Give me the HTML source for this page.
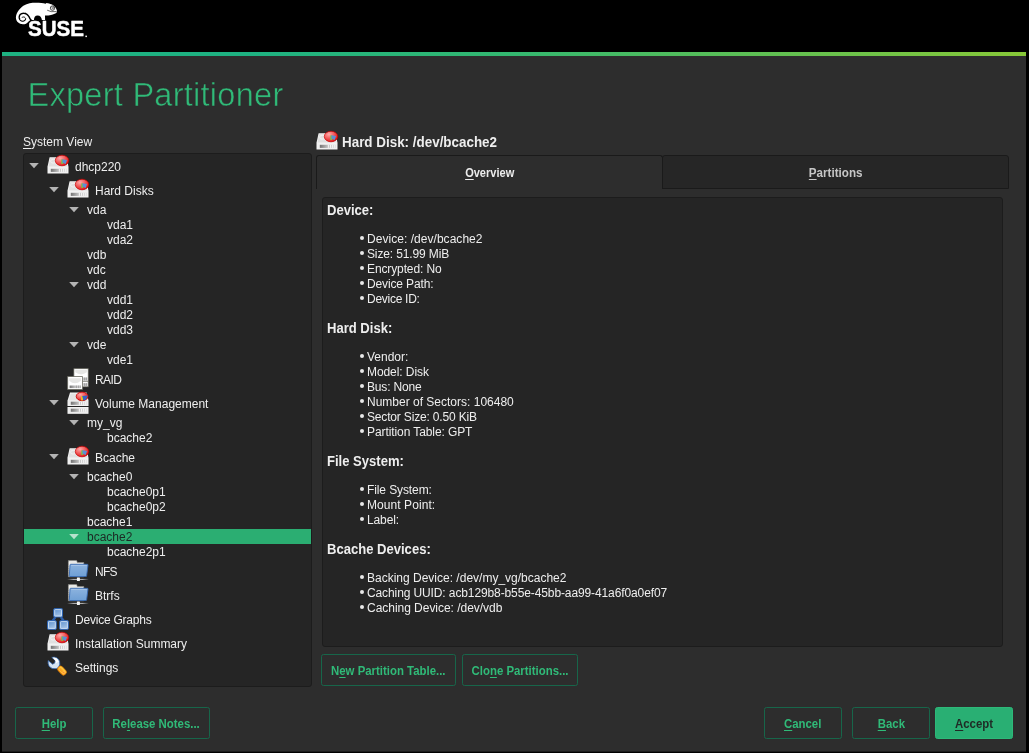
<!DOCTYPE html>
<html><head><meta charset="utf-8"><title>Expert Partitioner</title>
<style>
*{box-sizing:border-box;margin:0;padding:0}
html,body{width:1029px;height:753px;overflow:hidden;background:#000}
body{font-family:"Liberation Sans",sans-serif;font-size:12px;color:#eeeeee;position:relative}
u{text-decoration:underline;text-underline-offset:2px}
#wrap{position:absolute;left:0;top:0;width:1029px;height:753px;will-change:transform}
#main{position:absolute;left:2px;top:56px;width:1024px;height:695px;background:#2d2d2d}
#bar{position:absolute;left:2px;top:52px;width:1024px;height:4px;background:linear-gradient(to right,#1eb282 0%,#1eb282 24%,#34b870 50%,#60c052 75%,#88c838 100%)}
#title{position:absolute;left:27.5px;top:73px;letter-spacing:0.24px;font-size:32.6px;color:#30ba78;line-height:44px;white-space:nowrap;-webkit-text-stroke:0.55px #2d2d2d}
.lbl{position:absolute;white-space:nowrap}
#tree{position:absolute;left:23px;top:153px;width:289px;height:534px;background:#252525;border:1px solid #1c1c1c;border-radius:3px}
.row{position:absolute;left:0;width:287px;white-space:nowrap}
.row.sel{background:#2bae72;color:#1c2a24}
.tx{position:absolute;top:0;transform:translateY(0.5px)}
.icw{position:absolute;top:0;width:24px;height:24px}
.ic{display:block}
.ar{position:absolute;width:10px;height:6px;background:#b4b4b4;clip-path:polygon(0.2px 0,9.8px 0,5px 5.3px)}
.sel .ar{background:#b6e2cc}
#hdr{position:absolute;left:342px;top:133px;font-weight:bold;font-size:14.7px;line-height:18px;white-space:nowrap;transform:scaleX(.913);transform-origin:0 50%}
.tab{position:absolute;text-align:center;font-weight:bold;color:#ececec}
#tab1{left:316px;top:155px;width:347px;height:34px;border:1px solid #1a1a1a;border-bottom:none;border-radius:3px 3px 0 0;line-height:34px;background:#2d2d2d}
#tab2{left:662px;top:155px;width:347px;height:34px;border:1px solid #1a1a1a;border-radius:3px 3px 0 0;line-height:35px;background:#262626;color:#c6c6c6}
#pane{position:absolute;left:322px;top:197px;width:681px;height:450px;background:#252525;border:1px solid #1c1c1c;border-radius:3px}
#pane h3{position:absolute;left:4px;font-size:14.5px;line-height:18px;font-weight:bold;white-space:nowrap;transform:scaleX(0.9);transform-origin:0 50%}
#pane ul{position:absolute;left:37px;list-style:none}
#pane li{height:15px;line-height:15px;white-space:nowrap;position:relative;padding-left:7px}
#pane li:before{content:"";position:absolute;left:0;top:3.5px;width:4px;height:4px;border-radius:50%;background:#e8e8e8}
.btn{position:absolute;height:32px;border:1px solid #17664a;border-radius:2.5px;color:#30ba78;font-weight:bold;text-align:center;line-height:33px;white-space:nowrap}
.btn span,.tab span{display:inline-block;transform:scaleX(.95)}
.btn.def{background:#29af73;border-color:#2db979;color:#1f2a25}
</style></head><body>
<svg width="0" height="0" style="position:absolute">
<defs>
<linearGradient id="g-vent" x1="0" y1="0" x2="1" y2="0"><stop offset="0" stop-color="#747474"/><stop offset="0.5" stop-color="#c4c4c4"/><stop offset="1" stop-color="#e2e2e2"/></linearGradient>
<radialGradient id="g-red" cx="0.35" cy="0.3" r="0.75"><stop offset="0" stop-color="#ffaaaa"/><stop offset="0.5" stop-color="#f25c5c"/><stop offset="0.85" stop-color="#e62a2a"/><stop offset="1" stop-color="#cc0000"/></radialGradient>
<linearGradient id="g-net" gradientUnits="userSpaceOnUse" x1="1" y1="0" x2="23" y2="0"><stop offset="0" stop-color="#d8d8d8" stop-opacity="0"/><stop offset="0.3" stop-color="#e0e0e0" stop-opacity="0.9"/><stop offset="0.7" stop-color="#e0e0e0" stop-opacity="0.9"/><stop offset="1" stop-color="#d8d8d8" stop-opacity="0"/></linearGradient>
<linearGradient id="g-blue" x1="0" y1="0" x2="0" y2="1"><stop offset="0" stop-color="#8db3de"/><stop offset="1" stop-color="#6f9fd4"/></linearGradient>
<linearGradient id="g-sq" x1="0" y1="0" x2="0.4" y2="1"><stop offset="0" stop-color="#5a8fce"/><stop offset="1" stop-color="#a4c3e6"/></linearGradient>
<linearGradient id="g-or" x1="0" y1="0" x2="0" y2="1"><stop offset="0" stop-color="#ffc83a"/><stop offset="1" stop-color="#f58a10"/></linearGradient>
<g id="vent"><rect x="0" y="0" width="16.2" height="3.1" fill="url(#g-vent)"/><path d="M8.6 0v3.1M10.7 0v3.1M12.8 0v3.1M14.9 0v3.1" stroke="#f4f4f4" stroke-width="1"/></g>
<g id="pie"><rect x="-0.9" y="-1.2" width="1.9" height="4.6" fill="#7fc241"/><path d="M0.2 -1.4L4.8 -0.6L3.2 3.9L1.6 2.2L0.4 2.6Z" fill="#5b8fd6"/></g>
<g id="i-hd">
<path d="M3.6 3.3h17l1.9 9.5v6.8h-21v-6.8z" fill="#f4f4f4"/>
<path d="M4.3 4.2h15.6l1.6 8.2h-19z" fill="#e0e0e0"/>
<ellipse cx="7.2" cy="7.2" rx="2.6" ry="1.9" fill="none" stroke="#f4f4f4" stroke-width="0.8"/>
<rect x="2.2" y="13.4" width="19.6" height="5.6" fill="#f0f0f0"/>
<use href="#vent" x="4.8" y="14.8"/>
<ellipse cx="16" cy="6.5" rx="6.7" ry="5.3" fill="url(#g-red)" stroke="#c80000" stroke-width="0.7"/>
<use href="#pie" x="16.2" y="6.6"/>
</g>
<g id="i-lvm">
<path d="M4 1.6h16.6l1.9 8v5.4h-21v-5.4z" fill="#f4f4f4"/>
<path d="M4.7 2.4h15.2l1.6 7h-19z" fill="#e3e3e3"/>
<rect x="2.2" y="10" width="19.6" height="4.4" fill="#ececec"/>
<use href="#vent" x="4.8" y="10.7"/>
<rect x="1.5" y="16" width="21" height="6.8" fill="#f4f4f4"/>
<rect x="2.2" y="16.7" width="19.6" height="5.4" fill="#ececec"/>
<use href="#vent" x="4.8" y="17.7"/>
<ellipse cx="16.1" cy="5.4" rx="5.9" ry="4.3" fill="url(#g-red)" stroke="#c00000" stroke-width="0.8"/>
<rect x="15" y="5" width="2" height="4.4" fill="#e8c020"/><path d="M16.2 5L22 4.6L20 8.6L17.4 9.4Z" fill="#3465c4"/>
</g>
<g id="i-raid">
<rect x="7.9" y="1.7" width="14.3" height="18.1" fill="#fff" stroke="#6c6c62" stroke-width="0.7"/>
<path d="M9.2 3.1h11.7v2.2q-5.8 4.2-11.7 0z" fill="#e6e6e4"/>
<rect x="17" y="10.5" width="4.6" height="2.9" fill="#c8c8c8"/><path d="M18.6 10.5v2.9M20.4 10.5v2.9" stroke="#8c8c8c" stroke-width="0.7"/>
<path d="M16.6 14.3h5.6" stroke="#6c6c62" stroke-width="0.8"/>
<rect x="17" y="16.2" width="4.6" height="2.7" fill="#c8c8c8"/><path d="M18.6 16.2v2.7M20.4 16.2v2.7" stroke="#8c8c8c" stroke-width="0.7"/>
<rect x="1.7" y="9.6" width="14.7" height="12.8" fill="#fff" stroke="#6c6c62" stroke-width="0.8"/>
<path d="M3.2 11.2h11.6v2.6q-5.8 5-11.6 0z" fill="#e6e6e4"/>
<rect x="3.6" y="18.5" width="11.4" height="2.6" fill="url(#g-vent)"/><path d="M10.4 18.5v2.6M12.4 18.5v2.6M14.2 18.5v2.6" stroke="#8c8c8c" stroke-width="0.7"/>
</g>
<g id="i-nfs">
<path d="M2.4 1.5h8.2l0.8 2h6.4v14.3h-15.4z" fill="#e9e9e6" stroke="#8a8a84" stroke-width="0.6"/>
<path d="M3.3 3.4v13" stroke="#fff" stroke-width="0.9" stroke-dasharray="1.2 1"/>
<path d="M4.7 5.3h16.6q0.8 0 0.7 0.8l-1.4 10.8q-0.1 0.6-0.8 0.6h-15.9q-0.7 0-0.6-0.7l0.7-10.8q0.1-0.7 0.7-0.7z" fill="url(#g-blue)" stroke="#3568b0" stroke-width="0.9"/>
<path d="M5.2 6.4h15.6" stroke="#b4cfee" stroke-width="0.7"/>
<path d="M1.2 20.4h21.4" stroke="url(#g-net)" stroke-width="0.9"/>
<rect x="10.9" y="18.6" width="3" height="3.4" rx="0.5" fill="#f4f4f4"/>
</g>
<g id="i-graph">
<path d="M9.5 10l-3 4M14.8 10l3 4" stroke="#2c5ea8" stroke-width="2.4"/>
<rect x="7.7" y="1.6" width="8.8" height="8.4" rx="1" fill="url(#g-sq)" stroke="#2c62b0" stroke-width="1"/>
<rect x="8.7" y="2.6" width="6.8" height="6.4" rx="0.6" fill="none" stroke="#d4e3f5" stroke-width="0.8"/>
<rect x="1.5" y="13.6" width="8.8" height="8.8" rx="1" fill="url(#g-sq)" stroke="#2c62b0" stroke-width="1"/>
<rect x="2.5" y="14.6" width="6.8" height="6.8" rx="0.6" fill="none" stroke="#d4e3f5" stroke-width="0.8"/>
<rect x="13.6" y="13.6" width="8.8" height="8.8" rx="1" fill="url(#g-sq)" stroke="#2c62b0" stroke-width="1"/>
<rect x="14.6" y="14.6" width="6.8" height="6.8" rx="0.6" fill="none" stroke="#d4e3f5" stroke-width="0.8"/>
</g>
<g id="i-set">
<path d="M5.8 2.4Q11.6 1.2 13.5 6.2Q14.6 9.6 12.6 12.2L10.6 13.6Q6 14.6 3.2 11.4Q1.6 8.6 2.2 5.6L6.6 9.2Q9.4 8.6 9.4 5.6Z" fill="#d6e4f2" stroke="#3a6cb4" stroke-width="0.8" stroke-linejoin="round"/>
<path d="M6.6 2.6Q11 2.2 12.6 6.4L9.8 8.6Q10 5.6 6.6 2.6z" fill="#fff"/>
<rect x="-4.9" y="-2.8" width="9.8" height="5.6" rx="2.4" transform="translate(16 15.6) rotate(47)" fill="url(#g-or)" stroke="#f08a08" stroke-width="0.7"/>
<rect x="-3.6" y="-1.6" width="7.2" height="3.2" rx="1.4" transform="translate(16 15.6) rotate(47)" fill="none" stroke="#ffd858" stroke-width="0.6"/><circle cx="17.7" cy="17.5" r="1.1" fill="#ff8c28" stroke="#ffd070" stroke-width="0.4"/>
</g>
</defs></svg>
<div id="wrap">
<svg id="logo" width="100" height="52" viewBox="0 0 100 52" style="position:absolute;left:0;top:0">
<path d="M15.9 17.8C16 13.5 18.2 9.6 23.3 5.7C28 3.2 32 2.7 36 2.75C40 2.8 43 2.9 45.6 3.7L46.5 3C48.5 3.2 50 3.8 51.4 4.3C53.5 5.3 55.2 6.8 56.1 8.4C56.8 9.6 57 10.8 56.9 11.8C56.6 12.8 56 13.3 55.3 13.6C53.5 14.4 52 14.7 51 14.9C49.5 15.2 47.5 15.4 45 15.6L45.1 19.9L41.9 19.9C41.6 17.5 40.2 15.5 37.6 15.5C35 15.5 34 17.6 34 19.9L30.4 19.9L28.6 21.4C27 23.6 25 24.3 22.9 24.25C19 24.2 16 21.5 15.9 17.8Z" fill="#fff"/>
<path d="M22.20 17.35 L22.26 17.33 L22.33 17.30 L22.42 17.27 L22.51 17.24 L22.61 17.20 L22.73 17.16 L22.84 17.12 L22.96 17.08 L23.07 17.05 L23.19 17.02 L23.30 17.01 L23.40 17.00 L23.50 17.00 L23.60 17.00 L23.70 17.01 L23.81 17.01 L23.91 17.03 L24.01 17.05 L24.11 17.07 L24.21 17.10 L24.31 17.14 L24.41 17.18 L24.51 17.24 L24.60 17.30 L24.70 17.37 L24.80 17.45 L24.91 17.54 L25.02 17.64 L25.13 17.75 L25.23 17.86 L25.33 17.97 L25.41 18.09 L25.49 18.22 L25.55 18.34 L25.58 18.47 L25.60 18.60 L25.60 18.74 L25.58 18.88 L25.54 19.04" fill="none" stroke="#000" stroke-width="1.0" stroke-linecap="round" stroke-linejoin="round"/><path d="M25.54 19.04 L25.49 19.20 L25.43 19.37 L25.35 19.53 L25.26 19.70 L25.17 19.86 L25.06 20.01 L24.95 20.15 L24.83 20.28 L24.70 20.40 L24.56 20.51 L24.41 20.61 L24.24 20.71 L24.07 20.81 L23.88 20.90 L23.69 20.98 L23.49 21.05 L23.29 21.11 L23.09 21.16 L22.89 21.19 L22.69 21.20 L22.50 21.20 L22.31 21.18 L22.11 21.15 L21.90 21.10 L21.69 21.03 L21.48 20.96 L21.27 20.87 L21.07 20.77 L20.87 20.66 L20.68 20.53 L20.51 20.40 L20.34 20.25 L20.20 20.10 L20.07 19.93 L19.94 19.74 L19.83 19.54 L19.72 19.32 L19.62 19.09 L19.53 18.85" fill="none" stroke="#000" stroke-width="1.1" stroke-linecap="round" stroke-linejoin="round"/><path d="M19.53 18.85 L19.45 18.61 L19.38 18.36 L19.33 18.11 L19.29 17.87 L19.26 17.63 L19.25 17.40 L19.25 17.17 L19.27 16.93 L19.29 16.69 L19.33 16.45 L19.38 16.20 L19.45 15.96 L19.52 15.73 L19.61 15.50 L19.72 15.28 L19.83 15.07 L19.96 14.88 L20.10 14.70 L20.26 14.54 L20.44 14.38 L20.63 14.24 L20.84 14.10 L21.07 13.97 L21.30 13.86 L21.55 13.75 L21.79 13.66 L22.05 13.57 L22.30 13.50 L22.55 13.44 L22.80 13.40 L23.05 13.37 L23.31 13.35 L23.58 13.34 L23.85 13.34 L24.13 13.35 L24.41 13.38 L24.68 13.41 L24.96 13.46 L25.23 13.53" fill="none" stroke="#000" stroke-width="1.45" stroke-linecap="round" stroke-linejoin="round"/><path d="M25.23 13.53 L25.50 13.60 L25.75 13.69 L26.00 13.80 L26.24 13.92 L26.48 14.07 L26.72 14.23 L26.95 14.40 L27.18 14.59 L27.40 14.79 L27.62 15.00 L27.83 15.22 L28.03 15.44 L28.23 15.66 L28.42 15.88 L28.60 16.10 L28.77 16.33 L28.93 16.57 L29.08 16.82 L29.22 17.08 L29.36 17.35 L29.49 17.61 L29.61 17.87 L29.73 18.13 L29.85 18.37 L29.97 18.60 L30.08 18.81 L30.20 19.00 L30.32 19.17 L30.44 19.32 L30.56 19.47 L30.67 19.60 L30.79 19.72 L30.90 19.83 L31.01 19.93 L31.10 20.02 L31.19 20.10 L31.27 20.18 L31.34 20.24 L31.40 20.30" fill="none" stroke="#000" stroke-width="1.45" stroke-linecap="round" stroke-linejoin="round"/>
<circle cx="52.5" cy="8.1" r="2.2" fill="none" stroke="#000" stroke-width="0.7"/>
<circle cx="52.7" cy="7.9" r="0.9" fill="none" stroke="#000" stroke-width="0.5"/>
<path d="M47.2 10.2Q50.5 12.4 56.6 11.6" fill="none" stroke="#000" stroke-width="0.6"/>
<text x="28" y="36.3" font-family="'Liberation Sans',sans-serif" font-weight="bold" font-size="21.6" fill="#fff" stroke="#fff" stroke-width="0.5" stroke-linejoin="round" textLength="56" lengthAdjust="spacingAndGlyphs">SUSE</text>
<rect x="85.4" y="35.6" width="1.5" height="1.5" fill="#fff"/>
</svg>
<div id="bar"></div>
<div id="main"></div><div style="position:absolute;left:2px;top:751px;width:1024px;height:1px;background:#1c1c1c"></div>
<div id="title">Expert Partitioner</div>
<div class="lbl" style="left:23px;top:134px;line-height:16px"><u>S</u>ystem View</div>
<div id="tree">
<div class="row" style="top:0px;height:24px;line-height:24px"><i class="ar" style="left:5px;top:9px"></i><span class="icw" style="left:22px"><svg class="ic" width="24" height="24" viewBox="0 0 24 24"><use href="#i-hd"/></svg></span><span class="tx" style="left:51px">dhcp220</span></div>
<div class="row" style="top:24px;height:24px;line-height:24px"><i class="ar" style="left:25px;top:9px"></i><span class="icw" style="left:42px"><svg class="ic" width="24" height="24" viewBox="0 0 24 24"><use href="#i-hd"/></svg></span><span class="tx" style="left:71px">Hard Disks</span></div>
<div class="row" style="top:48px;height:15px;line-height:15px"><i class="ar" style="left:45px;top:5px"></i><span class="tx" style="left:63px">vda</span></div>
<div class="row" style="top:63px;height:15px;line-height:15px"><span class="tx" style="left:83px">vda1</span></div>
<div class="row" style="top:78px;height:15px;line-height:15px"><span class="tx" style="left:83px">vda2</span></div>
<div class="row" style="top:93px;height:15px;line-height:15px"><span class="tx" style="left:63px">vdb</span></div>
<div class="row" style="top:108px;height:15px;line-height:15px"><span class="tx" style="left:63px">vdc</span></div>
<div class="row" style="top:123px;height:15px;line-height:15px"><i class="ar" style="left:45px;top:5px"></i><span class="tx" style="left:63px">vdd</span></div>
<div class="row" style="top:138px;height:15px;line-height:15px"><span class="tx" style="left:83px">vdd1</span></div>
<div class="row" style="top:153px;height:15px;line-height:15px"><span class="tx" style="left:83px">vdd2</span></div>
<div class="row" style="top:168px;height:15px;line-height:15px"><span class="tx" style="left:83px">vdd3</span></div>
<div class="row" style="top:183px;height:15px;line-height:15px"><i class="ar" style="left:45px;top:5px"></i><span class="tx" style="left:63px">vde</span></div>
<div class="row" style="top:198px;height:15px;line-height:15px"><span class="tx" style="left:83px">vde1</span></div>
<div class="row" style="top:213px;height:24px;line-height:24px"><span class="icw" style="left:42px"><svg class="ic" width="24" height="24" viewBox="0 0 24 24"><use href="#i-raid"/></svg></span><span class="tx" style="left:71px;letter-spacing:-0.6px">RAID</span></div>
<div class="row" style="top:237px;height:24px;line-height:24px"><i class="ar" style="left:25px;top:9px"></i><span class="icw" style="left:42px"><svg class="ic" width="24" height="24" viewBox="0 0 24 24"><use href="#i-lvm"/></svg></span><span class="tx" style="left:71px">Volume Management</span></div>
<div class="row" style="top:261px;height:15px;line-height:15px"><i class="ar" style="left:45px;top:5px"></i><span class="tx" style="left:63px">my_vg</span></div>
<div class="row" style="top:276px;height:15px;line-height:15px"><span class="tx" style="left:83px">bcache2</span></div>
<div class="row" style="top:291px;height:24px;line-height:24px"><i class="ar" style="left:25px;top:9px"></i><span class="icw" style="left:42px"><svg class="ic" width="24" height="24" viewBox="0 0 24 24"><use href="#i-hd"/></svg></span><span class="tx" style="left:71px">Bcache</span></div>
<div class="row" style="top:315px;height:15px;line-height:15px"><i class="ar" style="left:45px;top:5px"></i><span class="tx" style="left:63px">bcache0</span></div>
<div class="row" style="top:330px;height:15px;line-height:15px"><span class="tx" style="left:83px">bcache0p1</span></div>
<div class="row" style="top:345px;height:15px;line-height:15px"><span class="tx" style="left:83px">bcache0p2</span></div>
<div class="row" style="top:360px;height:15px;line-height:15px"><span class="tx" style="left:63px">bcache1</span></div>
<div class="row sel" style="top:375px;height:15px;line-height:15px"><i class="ar" style="left:45px;top:5px"></i><span class="tx" style="left:63px">bcache2</span></div>
<div class="row" style="top:390px;height:15px;line-height:15px"><span class="tx" style="left:83px">bcache2p1</span></div>
<div class="row" style="top:405px;height:24px;line-height:24px"><span class="icw" style="left:42px"><svg class="ic" width="24" height="24" viewBox="0 0 24 24"><use href="#i-nfs"/></svg></span><span class="tx" style="left:71px;letter-spacing:-0.7px">NFS</span></div>
<div class="row" style="top:429px;height:24px;line-height:24px"><span class="icw" style="left:42px"><svg class="ic" width="24" height="24" viewBox="0 0 24 24"><use href="#i-nfs"/></svg></span><span class="tx" style="left:71px">Btrfs</span></div>
<div class="row" style="top:453px;height:24px;line-height:24px"><span class="icw" style="left:22px"><svg class="ic" width="24" height="24" viewBox="0 0 24 24"><use href="#i-graph"/></svg></span><span class="tx" style="left:51px;letter-spacing:-0.22px">Device Graphs</span></div>
<div class="row" style="top:477px;height:24px;line-height:24px"><span class="icw" style="left:22px"><svg class="ic" width="24" height="24" viewBox="0 0 24 24"><use href="#i-hd"/></svg></span><span class="tx" style="left:51px">Installation Summary</span></div>
<div class="row" style="top:501px;height:24px;line-height:24px"><span class="icw" style="left:22px"><svg class="ic" width="24" height="24" viewBox="0 0 24 24"><use href="#i-set"/></svg></span><span class="tx" style="left:51px">Settings</span></div>
</div>
<svg style="position:absolute;left:315px;top:130px" width="24" height="24" viewBox="0 0 24 24"><use href="#i-hd"/></svg>
<div id="hdr">Hard Disk: /dev/bcache2</div>
<div class="tab" id="tab2"><span style="transform:scaleX(.97)"><u>P</u>artitions</span></div>
<div class="tab" id="tab1"><span style="transform:scaleX(.92)"><u>O</u>verview</span></div>
<div id="pane">
<h3 style="top:3px">Device:</h3>
<ul style="top:34px"><li style="letter-spacing:0.04px">Device: /dev/bcache2</li><li style="letter-spacing:-0.13px">Size: 51.99 MiB</li><li style="letter-spacing:-0.12px">Encrypted: No</li><li style="letter-spacing:-0.13px">Device Path:</li><li style="letter-spacing:-0.27px">Device ID:</li></ul>
<h3 style="top:121px">Hard Disk:</h3>
<ul style="top:152px"><li>Vendor:</li><li style="letter-spacing:-0.08px">Model: Disk</li><li style="letter-spacing:-0.16px">Bus: None</li><li>Number of Sectors: 106480</li><li style="letter-spacing:-0.17px">Sector Size: 0.50 KiB</li><li style="letter-spacing:-0.09px">Partition Table: GPT</li></ul>
<h3 style="top:254px">File System:</h3>
<ul style="top:285px"><li style="letter-spacing:-0.1px">File System:</li><li style="letter-spacing:0.07px">Mount Point:</li><li style="letter-spacing:-0.13px">Label:</li></ul>
<h3 style="top:342px">Bcache Devices:</h3>
<ul style="top:373px"><li>Backing Device: /dev/my_vg/bcache2</li><li style="letter-spacing:-0.11px">Caching UUID: acb129b8-b55e-45bb-aa99-41a6f0a0ef07</li><li style="letter-spacing:-0.03px">Caching Device: /dev/vdb</li></ul>
</div>
<div class="btn" style="left:321px;top:654px;width:135px"><span>N<u>e</u>w Partition Table...</span></div>
<div class="btn" style="left:462px;top:654px;width:116px"><span>Clo<u>n</u>e Partitions...</span></div>
<div class="btn" style="left:15px;top:707px;width:78px"><span><u>H</u>elp</span></div>
<div class="btn" style="left:103px;top:707px;width:107px"><span>Re<u>l</u>ease Notes...</span></div>
<div class="btn" style="left:764px;top:707px;width:78px"><span><u>C</u>ancel</span></div>
<div class="btn" style="left:852px;top:707px;width:78px"><span><u>B</u>ack</span></div>
<div class="btn def" style="left:935px;top:707px;width:78px"><span><u>A</u>ccept</span></div>
</div>
</body></html>
